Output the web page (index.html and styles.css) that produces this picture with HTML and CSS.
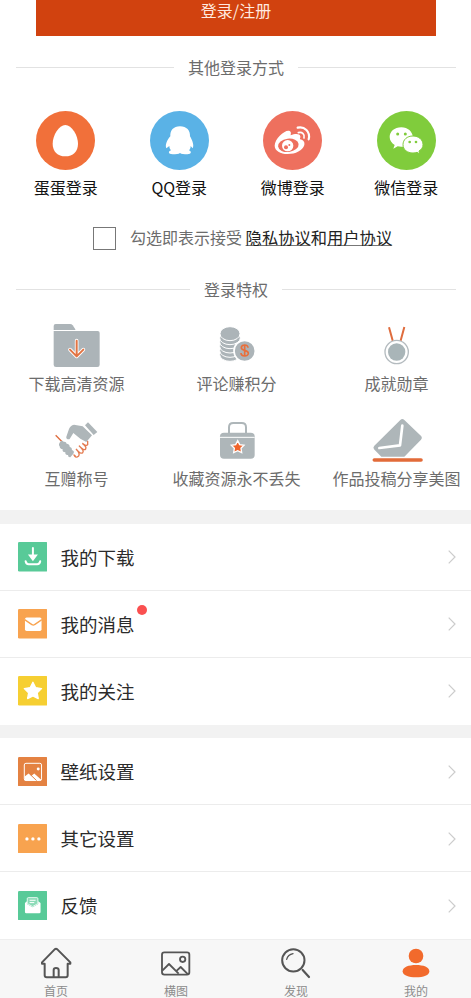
FILE: index.html
```html
<!DOCTYPE html>
<html lang="zh-CN">
<head>
<meta charset="utf-8">
<title>我的</title>
<link rel="stylesheet" href="styles.css">
</head>
<body>
<main class="page">
  <section class="account">
    <button class="login">登录/注册</button>
    <h2 class="divider methods-title"><span>其他登录方式</span></h2>
    <div class="methods">
      <a class="method"><svg viewBox="50 32 177 177"><circle cx="138.500" cy="120.500" r="88.500" fill="#f1703a"/><path d="M138 74C119 74 100 105 100 130C100 154 115 168 138 168S176 154 176 130C176 105 157 74 138 74Z" fill="#fff"/></svg><span>蛋蛋登录</span></a>
      <a class="method"><svg viewBox="390 32 177 177"><circle cx="478.500" cy="120.500" r="88.500" fill="#5ab2e6"/><path d="M480 78C460 78 450 91 451 108C440 121 435 134 439 144L448 137C448 144 451 147 453 150C444 153 444 162 458 162C468 162 476 161 480 158C484 161 492 162 502 162C515 162 515 153 507 150C510 147 512 143 512 137L518 144C523 134 517 121 510 108C511 91 500 78 480 78Z" fill="#fff"/></svg><span>QQ登录</span></a>
      <a class="method"><svg viewBox="69 32 177 177"><circle cx="157.500" cy="120.500" r="88.500" fill="#ee705e"/><path d="M104 136C104 114 137 86 149 92C155 95 152 102 152 105C165 99 180 99 181 108C182 112 179 115 180 117C190 119 195 125 193 134C188 151 167 161 143 161C121 161 104 151 104 136Z" fill="#fff"/><ellipse cx="145" cy="135" rx="31" ry="20" transform="rotate(-7 145 135)" fill="#ee705e"/><circle cx="143" cy="136" r="17" fill="#fff"/><circle cx="138" cy="141" r="6" fill="#ee705e"/><circle cx="148" cy="134" r="3" fill="#ee705e"/><g fill="none" stroke="#fff" stroke-width="6.500" stroke-linecap="round"><path d="M173 82C193 77 212 94 206 117"/><path d="M175 97C187 94 195 102 192 113" stroke-width="5"/></g></svg><span>微博登录</span></a>
      <a class="method"><svg viewBox="410 32 177 177"><circle cx="498.500" cy="120.500" r="88.500" fill="#80cc3c"/><path d="M483 81C462 81 448 94 448 110C448 120 454 129 463 134L459 145L472 138Q480 140 488 139C511 138 520 125 518 110C516 94 503 81 483 81Z" fill="#fff"/><path d="M518 107C500 107 488 118 488 133S501 158 518 158Q525 158 530 156L538 161L536 152C544 147 548 141 548 133C548 118 535 107 518 107Z" fill="#fff" stroke="#80cc3c" stroke-width="3"/><g fill="#80cc3c"><circle cx="472" cy="101" r="4.500"/><circle cx="495" cy="101" r="4.500"/><circle cx="508" cy="125" r="4"/><circle cx="527" cy="125" r="4"/></g></svg><span>微信登录</span></a>
    </div>
    <div class="agree"><i class="checkbox"></i><p>勾选即表示接受 <b><u>隐私协议</u>和<u>用户协议</u></b></p></div>
    <h2 class="divider perks-title"><span>登录特权</span></h2>
    <div class="perks">
      <div class="perk"><svg viewBox="81 30 180 150"><g fill="#acb4b8"><path d="M101 60V48Q101 42 107 42H150Q155 42 158 46L166 58V60Z"/><path d="M101 63H233Q239 63 239 69V164Q239 171 232 171H108Q101 171 101 164Z"/></g><g fill="none" stroke-linecap="round" stroke-linejoin="round"><path d="M170 92V138M150 119L170 139L190 119" stroke="#fff" stroke-width="11"/><path d="M170 92V138M150 119L170 139L190 119" stroke="#e27443" stroke-width="6"/></g></svg><span>下载高清资源</span></div>
      <div class="perk"><svg viewBox="558 30 180 150"><g fill="#acb4b8" stroke="#fff" stroke-width="3"><ellipse cx="627" cy="134" rx="31" ry="20"/><ellipse cx="627" cy="122" rx="31" ry="20"/><ellipse cx="627" cy="109" rx="31" ry="20"/><ellipse cx="627" cy="96" rx="31" ry="20"/><ellipse cx="627" cy="84" rx="31" ry="20"/><ellipse cx="627" cy="71" rx="30" ry="21"/><circle cx="671" cy="123" r="32" stroke-width="5"/></g><path d="M681 113C681 102 661 103 661 113C661 123 682 119 682 130C682 141 660 140 660 129M671 103V140" fill="none" stroke="#e96f3b" stroke-width="5"/></svg><span>评论赚积分</span></div>
      <div class="perk"><svg viewBox="348 30 180 150"><path d="M414 52L426 95M460 51L448 95" stroke="#df6c3d" stroke-width="6"/><circle cx="437" cy="126" r="35" fill="#fff" stroke="#b4bbbf" stroke-width="4"/><circle cx="437" cy="126" r="26" fill="#a9b5b8"/></svg><span>成就勋章</span></div>
      <div class="perk"><svg viewBox="81 30 180 150"><path d="M149 102C145 105 137 101 139 95L147 72Q151 61 162 59L188 64L216 91L199 111L181 101L160 84Z" fill="#aeb6b9"/><path d="M195 61L204 52L232 81L221 90Z" fill="#aeb6b9"/><path d="M107 91L127 111" stroke="#df6c3d" stroke-width="4"/><path d="M121 110Q126 105 131 110Q139 109 140 116Q149 117 149 125Q157 128 156 135Q165 139 160 146L151 157Q144 158 144 150Q135 151 136 142Q126 142 128 133Q119 132 119 124Q114 118 121 110Z" fill="#aeb6b9"/><path d="M162 150Q167 161 176 153Q181 145 168 132Q182 149 188 143Q194 137 177 122Q192 139 197 132Q201 125 187 115Q199 125 203 119V109M162 150L166 153" fill="none" stroke="#e47b50" stroke-width="4" stroke-linecap="round"/></svg><span>互赠称号</span></div>
      <div class="perk"><svg viewBox="558 30 180 150"><path d="M624 84V67Q624 54 637 54H662Q675 54 675 67V84" fill="none" stroke="#aeb6b9" stroke-width="6"/><path d="M597 94Q597 83 609 83H689Q701 83 701 94V150Q701 161 689 161H609Q597 161 597 150Z" fill="#aeb6b9"/><path d="M597 97H701" stroke="#fff" stroke-width="3"/><path d="M650 107L656 119L669 121L660 130L662 143L650 137L638 143L640 130L631 121L644 119Z" fill="#f0642b" stroke="#fff" stroke-width="4"/></svg><span>收藏资源永不丢失</span></div>
      <div class="perk"><svg viewBox="198 30 180 150"><path d="M298 45Q304 39 310 45L361 94Q365 99 360 104L310 155H241L219 133Q215 127 220 122Z" fill="#aeb6b9"/><path d="M304 62L297 121L235 129" fill="none" stroke="#fff" stroke-width="8" stroke-linecap="round" stroke-linejoin="round"/><path d="M220 165H360" stroke="#e26b39" stroke-width="11" stroke-linecap="round"/></svg><span>作品投稿分享美图</span></div>
    </div>
  </section>

  <section class="menu menu-first">
    <a class="row"><svg class="tile" viewBox="52 110 89 89"><rect x="52" y="110" width="89" height="89" rx="4" fill="#58ca98"/><path d="M97 128V154" stroke="#fff" stroke-width="6" stroke-linecap="round"/><path d="M82 148H112L97 168Z" fill="#fff"/><path d="M75 168Q76 177 84 177H110Q118 177 119 168" fill="none" stroke="#fff" stroke-width="6" stroke-linecap="round"/></svg><span class="name">我的下载</span><svg class="chevron" viewBox="0 0 8 14"><path d="M.7.700L7 7L.7 13.300"/></svg></a>
    <a class="row"><svg class="tile" viewBox="52 312 89 89"><rect x="52" y="312" width="89" height="89" rx="4" fill="#f8a34f"/><rect x="73" y="338" width="50" height="40" rx="5" fill="#fff"/><path d="M72 344L94 359Q98 362 102 359L124 344" fill="none" stroke="#f8a34f" stroke-width="4"/></svg><span class="name">我的消息<i class="dot"></i></span><svg class="chevron" viewBox="0 0 8 14"><path d="M.7.700L7 7L.7 13.300"/></svg></a>
    <a class="row"><svg class="tile" viewBox="52 514 89 89"><rect x="52" y="514" width="89" height="89" rx="4" fill="#f6cf32"/><path d="M97 533L105 549L123 552L110 565L113 582L97 574L81 582L84 565L71 552L89 549Z" fill="#fff" stroke="#fff" stroke-width="4" stroke-linejoin="round"/></svg><span class="name">我的关注</span><svg class="chevron" viewBox="0 0 8 14"><path d="M.7.700L7 7L.7 13.300"/></svg></a>
  </section>
  <section class="menu menu-second">
    <a class="row"><svg class="tile" viewBox="52 125 89 89"><rect x="52" y="125" width="89" height="89" rx="4" fill="#e48242"/><rect x="71" y="144" width="52" height="52" rx="5" fill="none" stroke="#fff" stroke-width="3"/><circle cx="113" cy="161" r="4.500" fill="#fff"/><path d="M72 184L84 175L92 182L101 175L122 194V196H72Z" fill="#fff"/><path d="M90 179L108 196" stroke="#e48242" stroke-width="3"/></svg><span class="name">壁纸设置</span><svg class="chevron" viewBox="0 0 8 14"><path d="M.7.700L7 7L.7 13.300"/></svg></a>
    <a class="row"><svg class="tile" viewBox="52 327 89 89"><rect x="52" y="327" width="89" height="89" rx="4" fill="#f8a34f"/><g fill="#fff"><circle cx="79" cy="372" r="5"/><circle cx="97" cy="372" r="5"/><circle cx="115" cy="372" r="5"/></g></svg><span class="name">其它设置</span><svg class="chevron" viewBox="0 0 8 14"><path d="M.7.700L7 7L.7 13.300"/></svg></a>
    <a class="row"><svg class="tile" viewBox="52 528 89 89"><rect x="52" y="528" width="89" height="89" rx="4" fill="#58ca98"/><path d="M73 564L79 559V567L96 577L113 567V559L120 564V591Q120 595 116 595H77Q73 595 73 591Z" fill="#fff"/><path d="M80 566V551Q80 548 83 548H109Q112 548 112 551V566L96 575Z" fill="#8bdbb7" stroke="#fff" stroke-width="2.500"/><path d="M87 556H105M87 563H101" stroke="#fff" stroke-width="3"/></svg><span class="name">反馈</span><svg class="chevron" viewBox="0 0 8 14"><path d="M.7.700L7 7L.7 13.300"/></svg></a>
  </section>

  <nav class="tabs">
    <a class="tab"><svg viewBox="108 42 120 108"><g fill="none" stroke="#555" stroke-width="6" stroke-linejoin="round" stroke-linecap="round"><path d="M134 101H126V97L164 58Q168 55 172 58L211 97V101H203V136Q203 142 197 142H140Q134 142 134 136Z"/><path d="M161 140V120Q161 114 168 114Q176 114 176 120V140"/></g></svg><span>首页</span></a>
    <a class="tab"><svg viewBox="468 42 120 108"><g fill="none" stroke="#555" stroke-width="5.500" stroke-linejoin="round"><rect x="486" y="67" width="82" height="67" rx="7"/><circle cx="548" cy="88" r="8"/><path d="M487 122L507 102L536 131M528 124L542 111L564 133"/></g></svg><span>横图</span></a>
    <a class="tab"><svg viewBox="123 162 120 108"><g fill="none" stroke="#555" stroke-width="6" stroke-linecap="round"><circle cx="175" cy="211" r="33.500"/><path d="M203 240L222 261" stroke-width="6.500"/><path d="M155 208Q159 194 174 191" stroke-width="4"/></g></svg><span>发现</span></a>
    <a class="tab"><svg viewBox="483 162 120 108"><g fill="#f26a2c"><circle cx="543" cy="198" r="22"/><path d="M503 244C503 231 521 225 543 225S583 231 583 244S565 262 543 262S503 257 503 244Z"/></g></svg><span>我的</span></a>
  </nav>
</main>
</body>
</html>
```
FILE: styles.css
```css
* { box-sizing: border-box; }
body {
  margin: 0;
  background: #fff;
  color: #6c6c6c;
  font: 400 16px/24px "Noto Sans CJK SC", sans-serif;
}
svg { display: block; flex: none; }
.page {
  display: flex;
  flex-direction: column;
  height: 998px;
  overflow: hidden;
}
.account { height: 510px; flex: none; }
.login {
  display: block;
  width: 400px;
  height: 36px;
  margin: 0 0 0 36px;
  padding: 0 0 15px;
  border: 0;
  background: #d1420f;
  color: #ffe9df;
  font: inherit;
  line-height: 21px;
}
.divider {
  display: flex;
  align-items: center;
  gap: 14px;
  height: 24px;
  margin: 0 15px 0 16px;
  font: inherit;
}
.divider::before,
.divider::after {
  content: "";
  flex: 1;
  height: 1px;
  background: #e2e2e2;
}
.methods-title { margin-top: 19px; }
.perks-title { margin-top: 27px; }
.methods {
  display: grid;
  grid-template-columns: repeat(4, 1fr);
  margin: 31.500px 8px 0 9px;
}
.method {
  display: flex;
  flex-direction: column;
  align-items: center;
  gap: 5px;
  color: #111;
}
.method svg { width: 59px; height: 59px; }
.agree {
  display: flex;
  align-items: center;
  gap: 14px;
  height: 24px;
  margin: 27.500px 0 0 93px;
}
.agree p { margin: -2px 0 0; white-space: nowrap; }
.agree b { color: #222; font-size: 16.300px; font-weight: 400; }
.agree u {
  text-decoration-color: #777;
  text-decoration-thickness: 1px;
  text-decoration-skip-ink: none;
  text-underline-offset: 1px;
}
.checkbox { width: 23px; height: 23px; border: 1.500px solid #777; }
.perks {
  display: grid;
  grid-template-columns: repeat(3, 160px);
  row-gap: 20px;
  margin: 19px 0 0 -3.500px;
}
.perk {
  display: flex;
  flex-direction: column;
  align-items: center;
  gap: 1px;
  white-space: nowrap;
}
.perk svg { width: 60px; height: 50px; }
.menu { flex: none; border-top: 14px solid #f2f2f2; }
.menu-second { border-top-width: 13px; }
.row {
  display: flex;
  align-items: center;
  height: 67px;
  padding: 0 15px 0 17.500px;
  border-bottom: 1px solid #ececec;
}
.menu-second .row { padding-top: 1px; }
.row:last-child { border-bottom-color: transparent; }
.tile { width: 29.500px; height: 29.500px; }
.name {
  position: relative;
  margin: -1px auto 0 13.500px;
  color: #2b2b2b;
  font-size: 18.500px;
}
.dot {
  position: absolute;
  top: -7px;
  right: -12px;
  width: 10px;
  height: 10px;
  border-radius: 50%;
  background: #fa5050;
}
.chevron {
  width: 8px;
  height: 14px;
  fill: none;
  stroke: #ccc;
  stroke-width: 1.200;
}
.tabs {
  display: grid;
  grid-template-columns: repeat(4, 120px);
  flex: 1;
  padding: 5px 0 0;
  box-shadow: inset 0 1px #eee;
  background: #f7f7f7;
  color: #8c8c8c;
  font-size: 12px;
  line-height: 18px;
  width: 480px;
  margin-left: -4px;
}
.tab { display: flex; flex-direction: column; align-items: center; gap: 2px; }
.tab svg { width: 40px; height: 36px; }
```
